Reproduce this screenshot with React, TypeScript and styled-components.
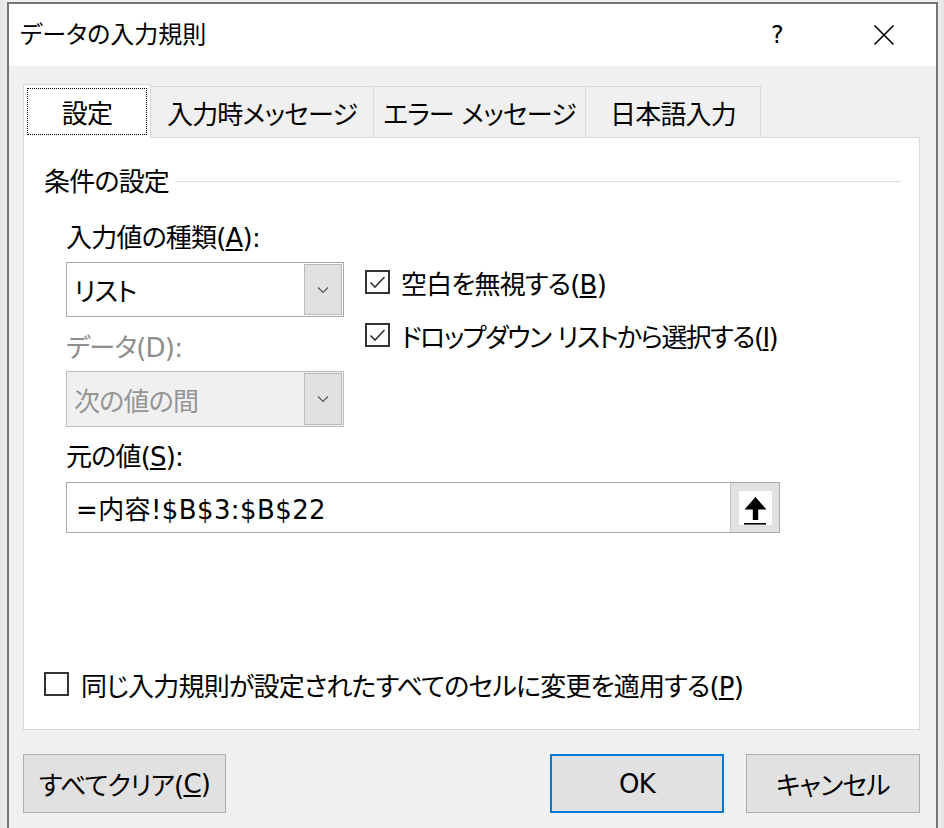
import React from 'react';
import styled, { createGlobalStyle } from 'styled-components';

const font = `"DejaVu Sans", "Noto Sans CJK JP", sans-serif`;

const GlobalStyle = createGlobalStyle`
  html, body {
    margin: 0;
    padding: 0;
    background: #e9e9e9;
  }
  body {
    font-family: ${font};
    font-feature-settings: "palt";
    letter-spacing: -0.8px;
    color: #000;
  }
`;

const Screen = styled.div`
  width: 944px;
  height: 828px;
  box-sizing: border-box;
  padding: 2px 6px 0 7px;
  overflow: hidden;
  background: linear-gradient(90deg, #e4e4e4, #f0f0f0 1%, #f0f0f0 99%, #e4e4e4);
`;

const Window = styled.div`
  height: 100%;
  box-sizing: border-box;
  border: 2px solid #747474;
  border-bottom: none;
  background: #f0f0f0;
  display: flex;
  flex-direction: column;
`;

const TitleBar = styled.div`
  height: 62px;
  flex-shrink: 0;
  background: #fff;
  display: flex;
  align-items: center;
  padding-left: 11px;
`;

const TitleText = styled.div`
  flex: 1;
  font-size: 24px;
  line-height: 30px;
  letter-spacing: 0;
`;

const TitleButton = styled.div<{ $w: number }>`
  width: ${p => p.$w}px;
  height: 62px;
  display: flex;
  align-items: center;
  justify-content: center;
  font-size: 24px;
`;

const Body = styled.div`
  flex: 1;
  padding: 18px 16px 0 14px;
  display: flex;
  flex-direction: column;
`;

const TabRow = styled.div`
  height: 53px;
  display: flex;
  align-items: flex-end;
`;

const Tab = styled.div<{ $w: number; $active?: boolean }>`
  position: relative;
  box-sizing: border-box;
  width: ${p => p.$w}px;
  height: ${p => (p.$active ? 54 : 51)}px;
  margin-bottom: ${p => (p.$active ? -1 : 0)}px;
  margin-left: ${p => (p.$active ? 0 : -1)}px;
  z-index: ${p => (p.$active ? 2 : 1)};
  background: ${p => (p.$active ? '#fff' : '#f0f0f0')};
  border: 1px solid #d9d9d9;
  border-bottom: none;
  display: flex;
  align-items: center;
  justify-content: center;
  font-size: 26px;
  padding: ${p => (p.$active ? '3px' : '0')};
`;

const FocusRect = styled.div`
  flex: 1;
  align-self: stretch;
  border: 1px dotted #000;
  display: flex;
  align-items: center;
  justify-content: center;
`;

const Panel = styled.div`
  height: 593px;
  box-sizing: border-box;
  background: #fff;
  border: 1px solid #d9d9d9;
  padding: 28px 18px 29px 20px;
  display: flex;
  flex-direction: column;
`;

const GroupRow = styled.div`
  display: flex;
  align-items: center;
  gap: 6px;
`;

const GroupLine = styled.div`
  flex: 1;
  height: 1px;
  background: #dcdcdc;
  margin-top: -2px;
`;

const Label = styled.div<{ $disabled?: boolean; $mt?: number }>`
  font-size: 26px;
  line-height: 32px;
  height: 32px;
  margin-top: ${p => p.$mt ?? 0}px;
  color: ${p => (p.$disabled ? '#8d8d8d' : '#000')};
  white-space: nowrap;
`;

const Section = styled.div`
  padding-left: 22px;
  margin-top: 24px;
  display: flex;
  flex-direction: column;
`;

const Columns = styled.div`
  display: flex;
  gap: 21px;
  margin-top: 8px;
`;

const LeftCol = styled.div`
  width: 278px;
  display: flex;
  flex-direction: column;
`;

const RightCol = styled.div`
  padding-top: 4px;
  display: flex;
  flex-direction: column;
  gap: 21px;
`;

const Select = styled.div<{ $disabled?: boolean; $h: number; $mt?: number }>`
  box-sizing: border-box;
  height: ${p => p.$h}px;
  margin-top: ${p => p.$mt ?? 0}px;
  border: 1px solid ${p => (p.$disabled ? '#bdbdbd' : '#a9a9a9')};
  background: ${p => (p.$disabled ? '#f0f0f0' : '#fff')};
  color: ${p => (p.$disabled ? '#959595' : '#000')};
  display: flex;
  align-items: stretch;
  padding: 1px;
`;

const SelectValue = styled.div`
  flex: 1;
  display: flex;
  align-items: center;
  padding-left: 6px;
  font-size: 26px;
`;

const DropButton = styled.div`
  width: 38px;
  box-sizing: border-box;
  background: #e1e1e1;
  border: 1px solid #b9b9b9;
  display: flex;
  align-items: center;
  justify-content: center;
`;

const CheckRow = styled.div<{ $tight?: boolean }>`
  display: flex;
  align-items: center;
  gap: 11px;
  height: 32px;
  font-size: 26px;
  white-space: nowrap;
  letter-spacing: ${p => (p.$tight ? '-1.6px' : 'inherit')};
`;

const Box = styled.div`
  width: 25px;
  height: 24px;
  box-sizing: border-box;
  border: 2px solid #333;
  background: #fff;
  display: flex;
  align-items: center;
  justify-content: center;
  flex-shrink: 0;
`;

const SourceInput = styled.div`
  box-sizing: border-box;
  width: 714px;
  height: 51px;
  margin-top: 9px;
  border: 1px solid #a9a9a9;
  display: flex;
  align-items: stretch;
`;

const SourceText = styled.div`
  flex: 1;
  display: flex;
  align-items: center;
  padding-left: 9px;
  font-size: 26px;
  letter-spacing: 0.4px;
`;

const RefButton = styled.div`
  width: 49px;
  box-sizing: border-box;
  background: #e1e1e1;
  border-left: 1px solid #c4c4c4;
  display: flex;
  align-items: center;
  justify-content: center;
`;

const BottomCheck = styled(CheckRow)`
  margin-top: auto;
  gap: 12px;
`;

const ButtonRow = styled.div`
  display: flex;
  margin-top: 24px;
  gap: 22px;
`;

const Button = styled.div<{ $w: number; $default?: boolean }>`
  box-sizing: border-box;
  width: ${p => p.$w}px;
  height: 59px;
  background: #e1e1e1;
  border: ${p => (p.$default ? '2px solid #0078d7' : '1px solid #adadad')};
  display: flex;
  align-items: center;
  justify-content: center;
  font-size: 26px;
  white-space: nowrap;
`;

const Spacer = styled.div`
  flex: 1;
`;

const Chevron = () => (
  <svg width="12" height="8" viewBox="0 0 12 8">
    <polyline points="1,1.5 6,6.5 11,1.5" fill="none" stroke="#555" strokeWidth="1.2" />
  </svg>
);

const Check = () => (
  <svg width="19" height="17" viewBox="0 0 19 17">
    <polyline points="2.5,8.5 7,13 16.5,3" fill="none" stroke="#333" strokeWidth="1.6" />
  </svg>
);

const CloseIcon = () => (
  <svg width="22" height="22" viewBox="0 0 22 22">
    <path d="M1.5 1.5 L20.5 20.5 M20.5 1.5 L1.5 20.5" stroke="#000" strokeWidth="1.6" />
  </svg>
);

const RefIcon = () => (
  <svg width="33" height="34" viewBox="0 0 33 34">
    <rect width="33" height="34" fill="#fff" />
    <path d="M16.5 6 L27.5 18.5 L19.2 18.5 L19.2 29 L13.8 29 L13.8 18.5 L5.5 18.5 Z" fill="#000" />
    <rect x="5" y="32" width="22" height="1.6" fill="#000" />
  </svg>
);

const tabs = [
  { label: '設定', w: 128 },
  { label: '入力時メッセージ', w: 224 },
  { label: 'エラー メッセージ', w: 213 },
  { label: '日本語入力', w: 176 },
];

export default function App() {
  return (
    <Screen>
      <GlobalStyle />
      <Window>
        <TitleBar>
          <TitleText>データの入力規則</TitleText>
          <TitleButton $w={110}>?</TitleButton>
          <TitleButton $w={104}>
            <CloseIcon />
          </TitleButton>
        </TitleBar>

        <Body>
          <TabRow>
            {tabs.map((t, i) => (
              <Tab key={t.label} $w={t.w} $active={i === 0}>
                {i === 0 ? <FocusRect>{t.label}</FocusRect> : t.label}
              </Tab>
            ))}
          </TabRow>

          <Panel>
            <GroupRow>
              <Label>条件の設定</Label>
              <GroupLine />
            </GroupRow>

            <Section>
              <Label>
                入力値の種類(<u>A</u>):
              </Label>
              <Columns>
                <LeftCol>
                  <Select $h={55}>
                    <SelectValue>リスト</SelectValue>
                    <DropButton>
                      <Chevron />
                    </DropButton>
                  </Select>
                  <Label $disabled $mt={15}>
                    データ(D):
                  </Label>
                  <Select $disabled $h={56} $mt={7}>
                    <SelectValue>次の値の間</SelectValue>
                    <DropButton>
                      <Chevron />
                    </DropButton>
                  </Select>
                </LeftCol>
                <RightCol>
                  <CheckRow>
                    <Box>
                      <Check />
                    </Box>
                    <span>
                      空白を無視する(<u>B</u>)
                    </span>
                  </CheckRow>
                  <CheckRow $tight>
                    <Box>
                      <Check />
                    </Box>
                    <span>
                      ドロップダウン リストから選択する(<u>I</u>)
                    </span>
                  </CheckRow>
                </RightCol>
              </Columns>

              <Label $mt={14}>
                元の値(<u>S</u>):
              </Label>
              <SourceInput>
                <SourceText>=内容!$B$3:$B$22</SourceText>
                <RefButton>
                  <RefIcon />
                </RefButton>
              </SourceInput>
            </Section>

            <BottomCheck>
              <Box />
              <span>
                同じ入力規則が設定されたすべてのセルに変更を適用する(<u>P</u>)
              </span>
            </BottomCheck>
          </Panel>

          <ButtonRow>
            <Button $w={203}>
              すべてクリア(<u>C</u>)
            </Button>
            <Spacer />
            <Button $w={174} $default>
              OK
            </Button>
            <Button $w={174}>キャンセル</Button>
          </ButtonRow>
        </Body>
      </Window>
    </Screen>
  );
}
